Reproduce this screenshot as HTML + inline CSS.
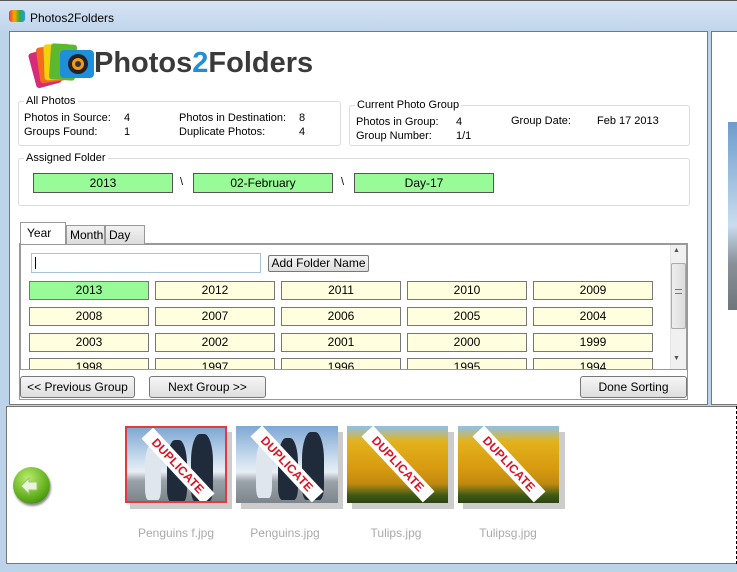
<!DOCTYPE html>
<html><head><style>
*{margin:0;padding:0;box-sizing:border-box}
body{width:737px;height:572px;overflow:hidden;background:#bcd3ea;font-family:"Liberation Sans",sans-serif;font-size:11px;color:#000;position:relative}
.a{position:absolute}
.title{left:0;top:0;width:737px;height:31px;background:linear-gradient(#d6e4f3,#c0d5ec);border-top:1px solid #555}
.panel{background:#fff;border:1px solid #777}
.grp{border:1px solid #dcdcdc;border-radius:3px}
.lbl{background:#fff;padding:0 2px}
.gbox{background:#98fb98;border:1px solid #555;text-align:center;line-height:18px;font-size:12px}
.cell{background:#ffffe0;border:1px solid #777;text-align:center;line-height:17px;font-size:12px;height:19px;width:120px}
.btn{border:1px solid #777;border-radius:3px;background:linear-gradient(#f6f6f6,#dedede);text-align:center;font-size:12px}
.tab{border:1px solid #999;border-bottom:none;background:linear-gradient(#f2f2f2,#dcdcdc);font-size:12px;padding-left:3px;line-height:18px}
.th{position:absolute;width:102px;height:77px;overflow:hidden}
.sh{position:absolute;width:102px;height:77px;background:#ccc}
.peng{background:linear-gradient(#7fa8d4 0%,#cfe0ef 45%,#e8eef4 60%,#9aa2aa 72%,#7d858c 100%)}
.tul{background:linear-gradient(#8ec1ea 0%,#e3b21c 20%,#d89a10 55%,#c08a10 75%,#3d5a16 90%,#2c4410 100%)}
.pg{position:absolute;background:#1f2a3a;border-radius:40% 40% 20% 20%}
.dup{position:absolute;left:6px;top:30px;width:90px;height:16px;background:#fff;color:#e01020;font-weight:bold;font-size:12px;text-align:center;line-height:16px;transform:rotate(47deg);letter-spacing:0.3px}
.cap{position:absolute;top:526px;color:#aaa;font-size:12px;width:110px;text-align:center}
</style></head><body>
<div class="a title"></div>
<div class="a" style="left:9px;top:10px;width:16px;height:12px;background:linear-gradient(90deg,#e33,#fa0,#3a3,#29f);border-radius:3px"></div>
<div class="a" style="left:30px;top:11px;font-size:12px">Photos2Folders</div>

<div class="a panel" style="left:9px;top:31px;width:699px;height:374px"></div>
<div class="a panel" style="left:711px;top:31px;width:30px;height:374px"></div>
<div class="a" style="left:728px;top:122px;width:12px;height:188px;background:linear-gradient(#6f9ccc,#c9dcee 55%,#8a9199 75%,#6e757b)"></div>

<svg class="a" style="left:28px;top:40px" width="70" height="50">
<rect x="4" y="10" width="26" height="36" rx="3" fill="#d62a7a" transform="rotate(-15 17 28)"/>
<rect x="10" y="6" width="26" height="36" rx="3" fill="#f26b21" transform="rotate(-8 23 24)"/>
<rect x="16" y="4" width="26" height="36" rx="3" fill="#f5d10d" transform="rotate(-2 29 22)"/>
<rect x="22" y="4" width="26" height="36" rx="3" fill="#5cb82e" transform="rotate(4 35 22)"/>
<rect x="32" y="10" width="34" height="28" rx="4" fill="#1e8fd8"/>
<circle cx="50" cy="24" r="10" fill="#222"/><circle cx="50" cy="24" r="6" fill="#f39c12"/><circle cx="50" cy="24" r="3" fill="#333"/>
</svg>
<div class="a" style="left:94px;top:47px;font-size:29px;font-weight:bold;color:#3a3a3a;letter-spacing:0px">Photos<span style="color:#1e8fd8">2</span>Folders</div>

<div class="a grp" style="left:18px;top:101px;width:323px;height:45px"></div>
<div class="a lbl" style="left:24px;top:95px">All Photos</div>
<div class="a" style="left:24px;top:111px;line-height:14px">Photos in Source:<br>Groups Found:</div>
<div class="a" style="left:124px;top:111px;line-height:14px">4<br>1</div>
<div class="a" style="left:179px;top:111px;line-height:14px">Photos in Destination:<br>Duplicate Photos:</div>
<div class="a" style="left:299px;top:111px;line-height:14px">8<br>4</div>

<div class="a grp" style="left:349px;top:105px;width:341px;height:41px"></div>
<div class="a lbl" style="left:355px;top:99px">Current Photo Group</div>
<div class="a" style="left:356px;top:115px;line-height:14px">Photos in Group:<br>Group Number:</div>
<div class="a" style="left:456px;top:115px;line-height:14px">4<br>1/1</div>
<div class="a" style="left:511px;top:115px">Group Date:</div>
<div class="a" style="left:597px;top:115px">Feb 17 2013</div>

<div class="a grp" style="left:18px;top:158px;width:672px;height:48px"></div>
<div class="a lbl" style="left:24px;top:152px">Assigned Folder</div>
<div class="a gbox" style="left:33px;top:173px;width:140px;height:20px">2013</div>
<div class="a" style="left:180px;top:176px">\</div>
<div class="a gbox" style="left:193px;top:173px;width:140px;height:20px">02-February</div>
<div class="a" style="left:341px;top:176px">\</div>
<div class="a gbox" style="left:354px;top:173px;width:140px;height:20px">Day-17</div>

<div class="a" style="left:19px;top:243px;width:669px;height:157px;border:1px solid #999;background:#fff"></div>
<div class="a tab" style="left:66px;top:225px;width:39px;height:19px">Month</div>
<div class="a tab" style="left:105px;top:225px;width:40px;height:19px">Day</div>
<div class="a" style="left:20px;top:222px;width:46px;height:22px;border:1px solid #999;border-bottom:none;background:#fff;font-size:12px;padding-left:6px;line-height:20px">Year</div>
<div class="a" style="left:20px;top:244px;width:667px;height:126px;border:1px solid #999;background:#fff;overflow:hidden">
 <div class="a" style="left:10px;top:8px;width:230px;height:20px;border:1px solid #a9c3da"></div>
 <div class="a" style="left:14px;top:12px;width:1px;height:12px;background:#000"></div>
 <div class="a btn" style="left:247px;top:10px;width:101px;height:17px;line-height:15px;border-radius:2px">Add Folder Name</div>
 <div class="a" style="left:649px;top:0;width:17px;height:125px;background:#f0f0f0;border-left:1px solid #e4e4e4"></div>
 <div class="a" style="left:650px;top:18px;width:15px;height:66px;background:linear-gradient(90deg,#eee,#dcdcdc);border:1px solid #aaa;border-radius:2px"></div>
 <div class="a" style="left:652px;top:2px;font-size:7px;color:#555">▲</div>
 <div class="a" style="left:652px;top:110px;font-size:7px;color:#555">▼</div>
 <div class="a" style="left:654px;top:44px;width:7px;height:5px;border-top:1px solid #777;border-bottom:1px solid #777"></div>
</div>
<div class="a" style="left:21px;top:245px;width:648px;height:124px;overflow:hidden">
 <div class="a cell" style="left:8px;top:36px;background:#98fb98">2013</div>
 <div class="a cell" style="left:134px;top:36px">2012</div>
 <div class="a cell" style="left:260px;top:36px">2011</div>
 <div class="a cell" style="left:386px;top:36px">2010</div>
 <div class="a cell" style="left:512px;top:36px">2009</div>
 <div class="a cell" style="left:8px;top:62px">2008</div>
 <div class="a cell" style="left:134px;top:62px">2007</div>
 <div class="a cell" style="left:260px;top:62px">2006</div>
 <div class="a cell" style="left:386px;top:62px">2005</div>
 <div class="a cell" style="left:512px;top:62px">2004</div>
 <div class="a cell" style="left:8px;top:88px">2003</div>
 <div class="a cell" style="left:134px;top:88px">2002</div>
 <div class="a cell" style="left:260px;top:88px">2001</div>
 <div class="a cell" style="left:386px;top:88px">2000</div>
 <div class="a cell" style="left:512px;top:88px">1999</div>
 <div class="a cell" style="left:8px;top:113px">1998</div>
 <div class="a cell" style="left:134px;top:113px">1997</div>
 <div class="a cell" style="left:260px;top:113px">1996</div>
 <div class="a cell" style="left:386px;top:113px">1995</div>
 <div class="a cell" style="left:512px;top:113px">1994</div>
</div>
<div class="a btn" style="left:20px;top:376px;width:115px;height:22px;line-height:20px">&lt;&lt; Previous Group</div>
<div class="a btn" style="left:149px;top:376px;width:117px;height:22px;line-height:20px">Next Group &gt;&gt;</div>
<div class="a btn" style="left:580px;top:376px;width:107px;height:22px;line-height:20px">Done Sorting</div>

<div class="a panel" style="left:6px;top:406px;width:735px;height:158px"></div>
<div class="a" style="left:736px;top:406px;width:1px;height:158px;border-left:1px dashed #000"></div>
<div class="a" style="left:13px;top:467px;width:37px;height:37px;border-radius:50%;background:radial-gradient(circle at 40% 30%,#b8ec6a,#5fae1c 60%,#2e6e0a);box-shadow:1px 2px 2px #888"></div>
<svg class="a" style="left:17px;top:474px" width="24" height="24"><path d="M4 12 L12 4 L12 8 L20 8 L20 16 L12 16 L12 20 Z" fill="#e8f5d8" stroke="#9cc27a"/></svg>

<div class="sh" style="left:130px;top:432px"></div>
<div class="th peng" style="left:125px;top:426px;border:2px solid #e43a3a">
 <div class="pg" style="left:40px;top:12px;width:20px;height:62px"></div><div class="pg" style="left:64px;top:6px;width:22px;height:68px"></div><div class="pg" style="left:18px;top:16px;width:16px;height:56px;background:#dfe6ee"></div>
 <div class="dup">DUPLICATE</div></div>
<div class="sh" style="left:241px;top:432px"></div>
<div class="th peng" style="left:236px;top:426px">
 <div class="pg" style="left:42px;top:12px;width:20px;height:62px"></div><div class="pg" style="left:66px;top:6px;width:22px;height:68px"></div><div class="pg" style="left:20px;top:16px;width:16px;height:56px;background:#dfe6ee"></div>
 <div class="dup">DUPLICATE</div></div>
<div class="sh" style="left:352px;top:432px"></div>
<div class="th tul" style="left:347px;top:426px;width:101px"><div class="dup">DUPLICATE</div></div>
<div class="sh" style="left:463px;top:432px"></div>
<div class="th tul" style="left:458px;top:426px;width:101px"><div class="dup">DUPLICATE</div></div>
<div class="cap" style="left:121px">Penguins f.jpg</div>
<div class="cap" style="left:230px">Penguins.jpg</div>
<div class="cap" style="left:341px">Tulips.jpg</div>
<div class="cap" style="left:453px">Tulipsg.jpg</div>
</body></html>
